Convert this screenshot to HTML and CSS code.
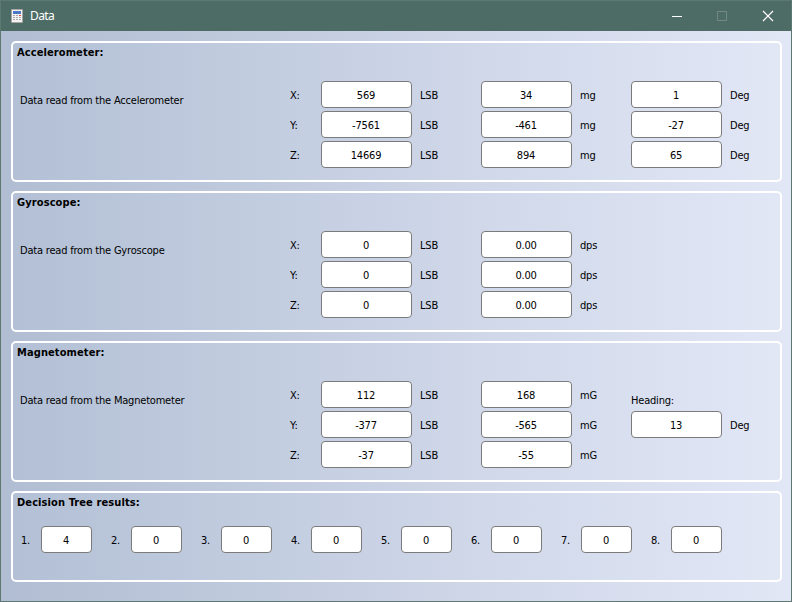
FILE: index.html
```html
<!DOCTYPE html>
<html lang="en">
<head>
<meta charset="utf-8">
<title>Data</title>
<link rel="stylesheet" href="styles.css">
</head>
<body>
<div class="window">
  <header class="titlebar">
    <svg class="app-icon" width="12" height="14" viewBox="0 0 12 14">
      <rect width="12" height="14" rx="1" fill="#a9a5a5"/>
      <rect x="1" y="1" width="10" height="12" fill="#f4f2f2"/>
      <rect x="2" y="2" width="8" height="3" fill="#4a78c4"/>
      <path d="M2 6.5h2M5 6.5h2M2 8.5h2M5 8.5h2M8 8.5h2M2 10.5h2M5 10.5h2M8 10.5h2" stroke="#aaa"/>
      <rect x="8" y="6" width="2" height="1" fill="#e04848"/>
    </svg>
    <h1 class="title">Data</h1>
    <svg class="controls" width="102" height="12" viewBox="0 0 102 12" fill="none">
      <path d="M0 6.5h10" stroke="#fff"/>
      <rect x="45.5" y="1.5" width="9" height="9" stroke="#718982"/>
      <path d="M91 1l10 10M101 1l-10 10" stroke="#fff" stroke-width="1.2"/>
    </svg>
  </header>
  <main class="content">
    <section class="group">
      <h2>Accelerometer:</h2>
      <div class="body">
        <p class="desc">Data read from the Accelerometer</p>
        <div class="grid">
          <span>X:</span><output>569</output><span class="unit">LSB</span><output>34</output><span class="unit">mg</span><output>1</output><span class="unit">Deg</span>
          <span>Y:</span><output>-7561</output><span class="unit">LSB</span><output>-461</output><span class="unit">mg</span><output>-27</output><span class="unit">Deg</span>
          <span>Z:</span><output>14669</output><span class="unit">LSB</span><output>894</output><span class="unit">mg</span><output>65</output><span class="unit">Deg</span>
        </div>
      </div>
    </section>
    <section class="group">
      <h2>Gyroscope:</h2>
      <div class="body">
        <p class="desc">Data read from the Gyroscope</p>
        <div class="grid">
          <span>X:</span><output>0</output><span class="unit">LSB</span><output>0.00</output><span class="unit">dps</span><i></i><i></i>
          <span>Y:</span><output>0</output><span class="unit">LSB</span><output>0.00</output><span class="unit">dps</span><i></i><i></i>
          <span>Z:</span><output>0</output><span class="unit">LSB</span><output>0.00</output><span class="unit">dps</span><i></i><i></i>
        </div>
      </div>
    </section>
    <section class="group">
      <h2>Magnetometer:</h2>
      <div class="body">
        <p class="desc">Data read from the Magnetometer</p>
        <div class="grid">
          <span>X:</span><output>112</output><span class="unit">LSB</span><output>168</output><span class="unit">mG</span><span class="heading">Heading:</span><i></i>
          <span>Y:</span><output>-377</output><span class="unit">LSB</span><output>-565</output><span class="unit">mG</span><output>13</output><span class="unit">Deg</span>
          <span>Z:</span><output>-37</output><span class="unit">LSB</span><output>-55</output><span class="unit">mG</span><i></i><i></i>
        </div>
      </div>
    </section>
    <section class="group results">
      <h2>Decision Tree results:</h2>
      <div class="trees">
        <div class="tree"><span>1.</span><output>4</output></div>
        <div class="tree"><span>2.</span><output>0</output></div>
        <div class="tree"><span>3.</span><output>0</output></div>
        <div class="tree"><span>4.</span><output>0</output></div>
        <div class="tree"><span>5.</span><output>0</output></div>
        <div class="tree"><span>6.</span><output>0</output></div>
        <div class="tree"><span>7.</span><output>0</output></div>
        <div class="tree"><span>8.</span><output>0</output></div>
      </div>
    </section>
  </main>
</div>
</body>
</html>
```
FILE: styles.css
```css
* { box-sizing: border-box; }
body { margin: 0; font: 11px/14px "DejaVu Sans Condensed", "DejaVu Sans", sans-serif; font-stretch: condensed; letter-spacing: -0.2px; color: #000; }
h1, h2, p { margin: 0; }
.window { width: 792px; height: 602px; border: 1px solid #5d7971; display: flex; flex-direction: column; background: #4d6c65; }
.titlebar { height: 30px; flex: none; display: flex; align-items: center; padding: 0 17px 0 10px; }
.title { margin-left: 7px; font: 12px/16px "Noto Sans", sans-serif; letter-spacing: -0.6px; color: #fff; }
.controls { margin-left: auto; }
.content { flex: 1; padding: 10px 9px 0 10px; display: flex; flex-direction: column; gap: 9px; background: linear-gradient(to right, #b1bdd2, #e2e7f6); }
.group { height: 141px; flex: none; border: 2px solid #fff; border-radius: 5px; background: linear-gradient(to right, #b3c0d5, #e2e7f6); }
.group h2 { height: 18px; padding: 3px 0 0 4px; font-size: 11px; line-height: 14px; font-weight: bold; letter-spacing: 0.1px; }
.body { display: flex; padding-top: 18px; }
.desc { width: 277px; padding: 15px 0 0 7px; white-space: nowrap; }
.grid { display: grid; grid-template-columns: 31px 91px 69px 91px 59px 91px 50px; grid-auto-rows: 30px; align-items: center; }
.grid span { padding-top: 4px; }
.grid .unit { padding-left: 8px; }
.grid .heading { padding-top: 14px; }
output { display: block; height: 27px; padding-right: 1px; border: 1px solid #7b7b7b; border-radius: 4px; background: #fff; line-height: 27px; text-align: center; }
.results { height: 91px; }
.trees { display: flex; gap: 19px; padding: 15px 0 0 8px; }
.tree { display: flex; align-items: center; }
.tree span { width: 20px; padding-top: 2px; }
.tree output { width: 51px; }
```
